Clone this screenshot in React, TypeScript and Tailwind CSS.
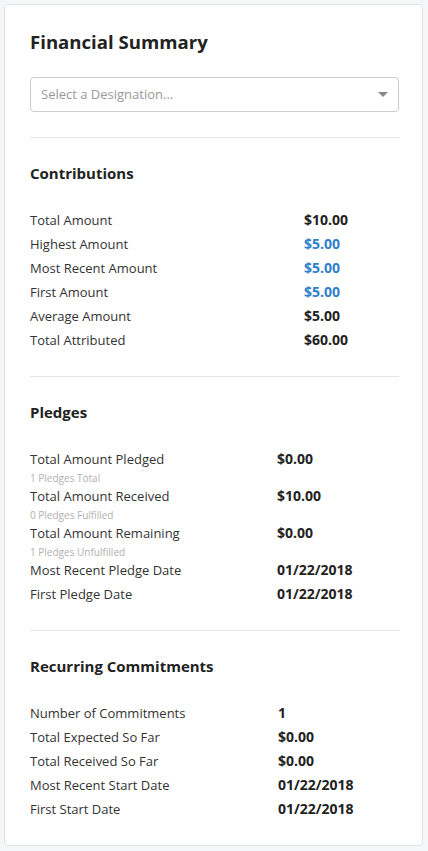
import React from 'react';

interface Row {
    label: string;
    value: string;
    sub?: string;
    blue?: boolean;
}

const contributions: Row[] = [
    { label: 'Total Amount', value: '$10.00' },
    { label: 'Highest Amount', value: '$5.00', blue: true },
    { label: 'Most Recent Amount', value: '$5.00', blue: true },
    { label: 'First Amount', value: '$5.00', blue: true },
    { label: 'Average Amount', value: '$5.00' },
    { label: 'Total Attributed', value: '$60.00' },
];

const pledges: Row[] = [
    { label: 'Total Amount Pledged', value: '$0.00', sub: '1 Pledges Total' },
    { label: 'Total Amount Received', value: '$10.00', sub: '0 Pledges Fulfilled' },
    { label: 'Total Amount Remaining', value: '$0.00', sub: '1 Pledges Unfulfilled' },
    { label: 'Most Recent Pledge Date', value: '01/22/2018' },
    { label: 'First Pledge Date', value: '01/22/2018' },
];

const recurring: Row[] = [
    { label: 'Number of Commitments', value: '1' },
    { label: 'Total Expected So Far', value: '$0.00' },
    { label: 'Total Received So Far', value: '$0.00' },
    { label: 'Most Recent Start Date', value: '01/22/2018' },
    { label: 'First Start Date', value: '01/22/2018' },
];

const Section: React.FC<{ title: string; rows: Row[]; labelWidth: string }> = ({ title, rows, labelWidth }) => (
    <div className="pt-[25px] pb-[24px]">
        <h3 className="text-[15px] leading-[20px] font-bold text-[#222]">{title}</h3>
        <div className="mt-[25px]">
            {rows.map(row => (
                <div key={row.label}>
                    <div className="flex items-baseline leading-[24px]">
                        <div className={`${labelWidth} shrink-0 text-[13px] text-[#333]`}>{row.label}</div>
                        <div className={`text-[14px] font-bold ${row.blue ? 'text-[#2f7fc9]' : 'text-[#222]'}`}>{row.value}</div>
                    </div>
                    {row.sub && <div className="text-[10px] leading-[13px] pt-[1px] -mb-[1px] text-[#b0b0b0]">{row.sub}</div>}
                </div>
            ))}
        </div>
    </div>
);

const App: React.FC = () => {
    return (
        <div className="min-h-screen bg-[#f5f6f8] p-[4px]" style={{ fontFamily: '"Open Sans", "Noto Sans", sans-serif' }}>
            <div className="bg-white border border-[#e2e3e5] rounded-[4px] pl-[25px] pr-[23px] pt-[25px] w-[419px]">
                <h2 className="text-[18.6px] leading-[24px] font-bold text-[#222]">Financial Summary</h2>
                <div className="mt-[23px] mb-[25px] h-[35px] border border-[#ccc] rounded-[4px] flex items-center justify-between pl-[10px] pr-[10px]">
                    <span className="text-[13px] text-[#999]">Select a Designation...</span>
                    <svg width="10" height="5" viewBox="0 0 10 5"><path d="M0 0h10L5 5z" fill="#888" /></svg>
                </div>
                <div className="border-t border-[#e5e5e5]" />
                <Section title="Contributions" rows={contributions} labelWidth="w-[274px]" />
                <div className="border-t border-[#e5e5e5]" />
                <Section title="Pledges" rows={pledges} labelWidth="w-[247px]" />
                <div className="border-t border-[#e5e5e5]" />
                <Section title="Recurring Commitments" rows={recurring} labelWidth="w-[248px]" />
            </div>
        </div>
    );
};

export default App;
